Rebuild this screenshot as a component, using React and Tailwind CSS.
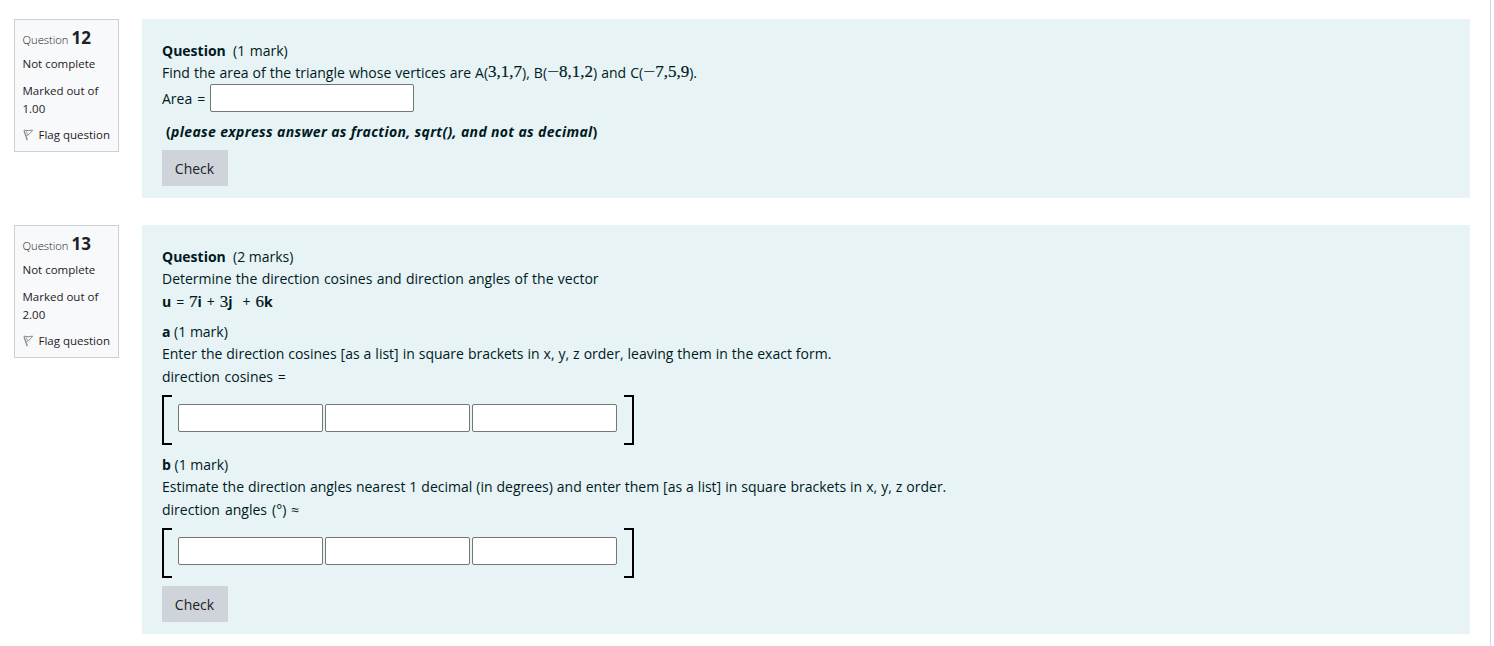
import React from "react";

const Num = ({ children }) => (
  <span className="font-['Liberation_Serif',serif] text-[17px] tracking-normal [-webkit-text-stroke:0.2px_#001a1e]">{children}</span>
);

const Minus = () => (
  <span className="inline-block w-3 origin-left scale-x-[1.28] font-['Liberation_Serif',serif] text-[17px]">−</span>
);

const Row = ({ className = "", children }) => (
  <div className={`flex items-center whitespace-pre ${className}`}>{children}</div>
);

const Blank = ({ className }) => (
  <input type="text" className={`h-7 rounded-xs border border-[#767676] bg-white px-1 outline-none ${className}`} />
);

const FlagIcon = () => (
  <svg width="12" height="12" viewBox="0 0 12 12" fill="none" stroke="#8a8a8a" strokeWidth="1">
    <path d="M1 1.5L4.3 11.3" strokeWidth="1.3" />
    <path d="M1.2 1.2Q5 2.2 9.6 1.1Q8.600 3 7.200 3.900Q6.500 5.700 3.400 6.600" />
    <path d="M3.500 2.500L4.400 5.500" strokeWidth=".8" />
  </svg>
);

const InfoBox = ({ number, marks }) => (
  <aside className="h-[133px] w-[105px] shrink-0 border border-[#cad0d7] bg-[#f8f9fa] pl-[7.5px] pt-[7px] text-[11.5px] text-[#1d2125]">
    <Row className="h-[22px]">
      <h3 className="flex items-baseline">
        <span className="w-[49px] text-[11.2px] font-light">Question</span>
        <span className="text-[17px] font-bold leading-[22px]">{number}</span>
      </h3>
    </Row>
    <Row className="mt-1 h-[22px]">Not complete</Row>
    <Row className="mt-[7px] h-[17px]">Marked out of</Row>
    <Row className="h-[18px] pt-0.5">{marks}</Row>
    <Row className="mt-[9px] h-[18px]">
      <span className="w-4"><FlagIcon /></span>
      <a href="#flag">Flag question</a>
    </Row>
  </aside>
);

const CheckButton = ({ className }) => (
  <button type="button" className={`block h-9 w-[66px] bg-[#ced4da] pr-px text-center text-[14px] text-[#1d2125] ${className}`}>Check</button>
);

const BracketList = () => (
  <div className="mt-[7px] flex h-[50px] w-[472px]">
    <div className="w-2.5 border-2 border-r-0 border-black" />
    <div className="ml-1.5 flex gap-0.5 pt-[9px]">
      <Blank className="w-[145px]" />
      <Blank className="w-[145px]" />
      <Blank className="w-[145px]" />
    </div>
    <div className="ml-auto w-2.5 border-2 border-l-0 border-black" />
  </div>
);

const Question = ({ number, marks, children }) => (
  <section className="flex gap-[23px]">
    <InfoBox number={number} marks={marks} />
    <div className="w-[1328px] bg-[#e7f3f5] px-5 pb-3 pt-5 text-[14px] text-[#001a1e]">{children}</div>
  </section>
);

export default function App() {
  return (
    <main className="h-[646px] w-[1491px] border-r border-[#d5d7d9] bg-white pl-3.5 pt-[19px] font-['Open_Sans',sans-serif]">
      <div className="flex flex-col gap-[27px]">
        <Question number="12" marks="1.00">
          <Row className="h-[23px]"><b className="w-[71px]">Question</b><span className="[word-spacing:1px]">(1 mark)</span></Row>
          <Row className="h-[22px] pb-0.5 [word-spacing:0.4px]">
            <span>Find the area of the triangle whose vertices are A(</span><Num>3,1,7</Num>
            <span>), B(</span><Minus /><Num>8,1,2</Num><span>) and C(</span><Minus /><Num>7,5,9</Num><span>).</span>
          </Row>
          <Row className="h-7"><label className="w-12 [word-spacing:1.5px]">Area =</label><Blank className="w-[204px]" /></Row>
          <Row className="mt-2 h-[23px] pl-1 font-bold tracking-[0.34px]">
            (<i>please express answer as fraction, sqrt(), and not as decimal</i>)
          </Row>
          <CheckButton className="mt-[7px]" />
        </Question>
        <Question number="13" marks="2.00">
          <Row className="h-[23px]"><b className="w-[71px]">Question</b><span>(2 marks)</span></Row>
          <Row className="h-[22px] pb-0.5 [word-spacing:0.7px]">Determine the direction cosines and direction angles of the vector</Row>
          <Row className="h-[23px] [word-spacing:1.3px]">
            <b>u</b><span> = </span><Num>7</Num><b>i</b><span> + </span><Num>3</Num><b>j</b><span>  + </span><Num>6</Num><b>k</b>
          </Row>
          <Row className="mt-[7px] h-[23px]"><b>a</b><span> (1 mark)</span></Row>
          <Row className="h-[22px] pb-0.5 [word-spacing:0.33px]">Enter the direction cosines [as a list] in square brackets in x, y, z order, leaving them in the exact form.</Row>
          <Row className="h-[23px] [word-spacing:1px]">direction cosines =</Row>
          <BracketList />
          <Row className="mt-2 h-[23px]"><b>b</b><span> (1 mark)</span></Row>
          <Row className="h-[22px] pb-0.5 [word-spacing:0.35px]">Estimate the direction angles nearest 1 decimal (in degrees) and enter them [as a list] in square brackets in x, y, z order.</Row>
          <Row className="h-[23px] [word-spacing:1.4px]">direction angles (°) ≈</Row>
          <BracketList />
          <CheckButton className="mt-2" />
        </Question>
      </div>
    </main>
  );
}
